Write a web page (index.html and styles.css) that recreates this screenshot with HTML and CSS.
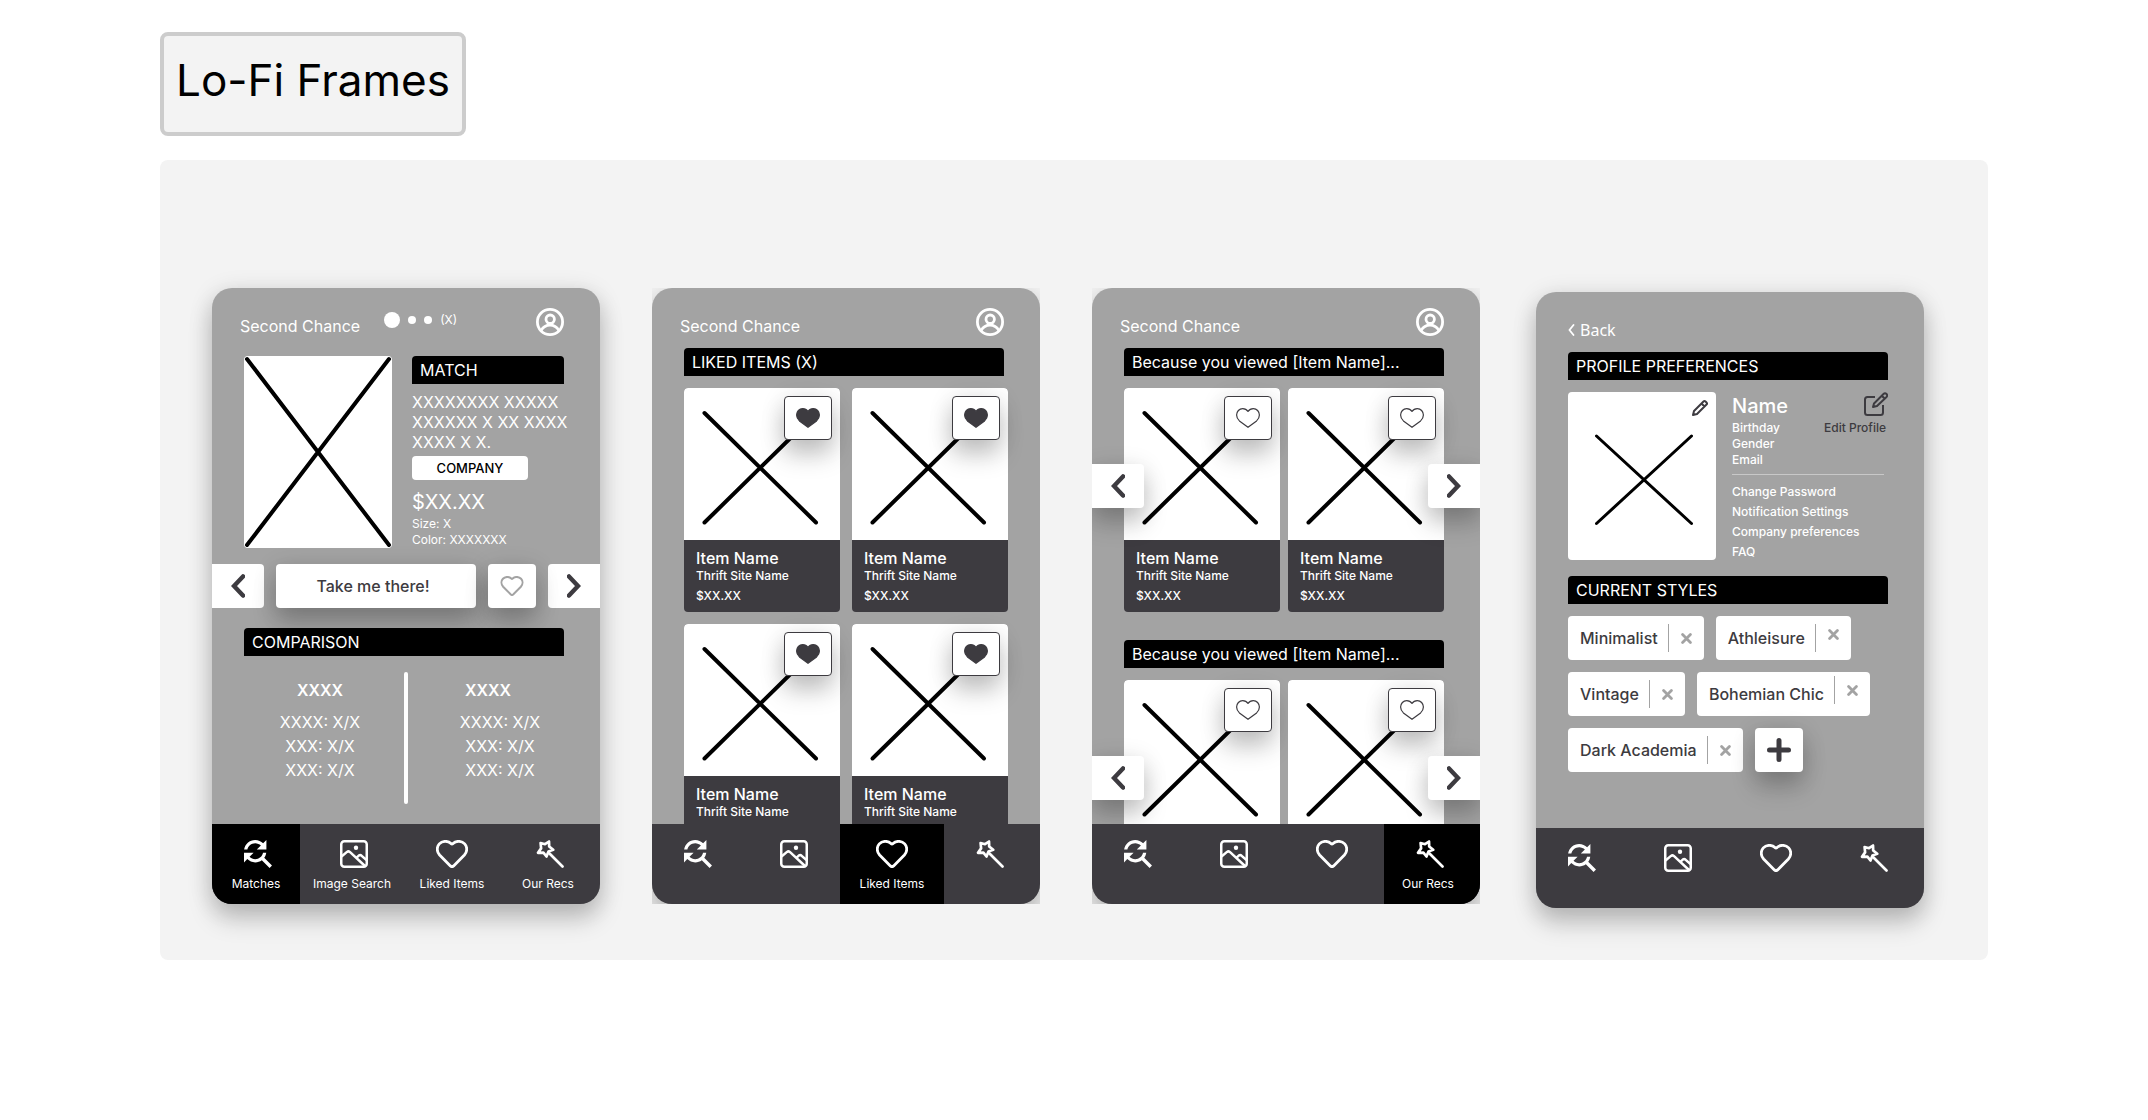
FILE: index.html
```html
<!DOCTYPE html>
<html lang="en">
<head>
<meta charset="utf-8">
<meta name="viewport" content="width=device-width, initial-scale=1">
<title>Second Chance – Lo-Fi Frames</title>
<link rel="stylesheet" href="styles.css">
</head>
<body>
<svg class="sprite" aria-hidden="true">
  <symbol id="i-user" viewBox="0 0 28 28"><g fill="none" stroke="currentColor" stroke-width="2.8"><circle cx="14" cy="14" r="12.6"/><circle cx="14.2" cy="11.2" r="4.2"/><path d="M5.2 22.4C7.2 19 10.2 17.2 14 17.2s6.8 1.8 8.8 5.2"/></g></symbol>
  <symbol id="i-match" viewBox="4 4 17.5 17.5"><path fill="currentColor" d="M11 6c1.38 0 2.63.56 3.54 1.46L12 10h6V4l-2.05 2.05C14.68 4.78 12.93 4 11 4c-3.53 0-6.43 2.61-6.92 6H6.1c.46-2.28 2.48-4 4.9-4zm5.64 9.14c.66-.9 1.12-1.97 1.28-3.14H15.9c-.46 2.28-2.48 4-4.9 4-1.38 0-2.63-.56-3.54-1.46L10 12H4v6l2.05-2.05C7.32 17.22 9.07 18 11 18c1.55 0 2.98-.51 4.14-1.36L20 21.49 21.49 20l-4.85-4.86z"/></symbol>
  <symbol id="i-image" viewBox="0 0 28 28"><g fill="none" stroke="currentColor" stroke-width="2.5" stroke-linejoin="round"><rect x="1.25" y="1.25" width="25.5" height="25.5" rx="3"/><path d="M1.5 16.5 7 11.9q1.4-1.1 2.8 0L25 26"/><path d="M16.6 17.6 18.8 15.6q1.3-1 2.6 0L26.5 20"/></g><circle cx="16" cy="7.8" r="2.2" fill="currentColor"/></symbol>
  <symbol id="i-heart" viewBox="0 0 32 28"><path fill="none" stroke="currentColor" stroke-width="2.8" stroke-linejoin="round" d="M14.4 25.9 3.6 15C.5 11.5.6 6.8 3.3 3.9 6.3.7 11.8.4 15 3.6q1 .8 2 0C20.2.4 25.7.7 28.7 3.9c2.7 2.9 2.8 7.6-.3 11.1L17.6 25.9q-1.6 1.4-3.2 0Z"/></symbol>
  <symbol id="i-like" viewBox="0 0 24 20"><path stroke="currentColor" stroke-width="1.2" stroke-linejoin="round" d="M12 19.3 3.4 12.9C1.6 11.3.6 9.4.6 7.1.6 3.5 3.3.6 6.7.6c2.2 0 4.1 1 5.3 2.8C13.2 1.6 15.1.6 17.3.6c3.4 0 6.1 2.9 6.1 6.5 0 2.3-1 4.2-2.8 5.8Z"/></symbol>
  <symbol id="i-wand" viewBox="0 0 28 28"><g fill="none" stroke="currentColor" stroke-width="2.7" stroke-linejoin="round" stroke-linecap="round"><path d="M4.6 3 9 4.2 13 1.5 13.2 6.5 17.2 9.8 12.5 11.5 10.5 16.5 7.4 12.6 2 12.8 5.1 8.4Z"/><path d="M13.5 13.5 26.5 26.5"/></g></symbol>
  <symbol id="i-prev" viewBox="0 0 14 24"><path fill="none" stroke="currentColor" stroke-width="4.4" stroke-linecap="round" d="M12 2.4 3 12l9 9.6"/></symbol>
  <symbol id="i-next" viewBox="0 0 14 24"><path fill="none" stroke="currentColor" stroke-width="4.4" stroke-linecap="round" d="M2 2.4 11 12l-9 9.6"/></symbol>
  <symbol id="i-back" viewBox="0 0 7 12"><path fill="none" stroke="currentColor" stroke-width="1.8" stroke-linecap="round" d="M5.5 1 1.5 6l4 5"/></symbol>
  <symbol id="i-pencil" viewBox="0 0 16 16"><path fill="none" stroke="currentColor" stroke-width="2" stroke-linejoin="round" d="M1 15 2 11 11.5 1.5q1-1 2 0l1 1q1 1 0 2L5 14ZM9.5 3.5l3 3"/></symbol>
  <symbol id="i-edit" viewBox="0 0 24 24"><g fill="none" stroke="currentColor" stroke-width="2" stroke-linejoin="round"><path d="M11 5H3.5Q1 5 1 7.5v13Q1 23 3.5 23h13q2.5 0 2.5-2.5V13"/><path d="M9 15 10 11.5 19.5 2q1.5-1.5 3 0t0 3L13 14ZM17.8 3.7l3 3"/></g></symbol>
  <symbol id="i-x" viewBox="0 0 11 11"><path fill="none" stroke="currentColor" stroke-width="2.8" stroke-linecap="round" d="m1.6 1.6 7.8 7.8m0-7.8-7.8 7.8"/></symbol>
  <symbol id="i-plus" viewBox="0 0 24 24"><path fill="none" stroke="currentColor" stroke-width="5" stroke-linecap="round" d="M12 2.5v19M2.5 12h19"/></symbol>
  <symbol id="i-cross" viewBox="0 0 156 152"><path fill="none" stroke="#000" stroke-width="4" stroke-linecap="round" d="M20.5 25 132 134.5M20.5 134.5 132 25"/></symbol>
</svg>

<header class="title"><h1>Lo-Fi Frames</h1></header>

<main class="board">

  <div class="frame">
    <section class="phone" aria-label="Matches">
      <header class="top">
        <span class="brand">Second Chance</span>
        <div class="pager"><i class="dot dot-lg"></i><i class="dot"></i><i class="dot"></i><span>(X)</span></div>
        <button class="plain account" aria-label="Account"><svg class="s28"><use href="#i-user"/></svg></button>
      </header>
      <div class="body body-match">
        <div class="match">
          <svg class="match-photo" viewBox="0 0 148 192" role="img" aria-label="Item photo"><path fill="none" stroke="#000" stroke-width="4" stroke-linecap="round" d="M3 3 145 189M3 189 145 3"/></svg>
          <div class="match-info">
            <h2 class="bar">MATCH</h2>
            <p class="desc">XXXXXXXX XXXXX<br>XXXXXX X XX XXXX<br>XXXX X X.</p>
            <button class="company">COMPANY</button>
            <p class="price">$XX.XX</p>
            <p class="small">Size: X</p>
            <p class="small">Color: XXXXXXX</p>
          </div>
        </div>
        <div class="actions">
          <button class="btn arrow arrow-prev" aria-label="Previous"><svg class="chev"><use href="#i-prev"/></svg></button>
          <button class="btn visit lift">Take me there!</button>
          <button class="btn square lift like-muted" aria-label="Like"><svg class="like"><use href="#i-heart"/></svg></button>
          <button class="btn arrow arrow-next" aria-label="Next"><svg class="chev"><use href="#i-next"/></svg></button>
        </div>
        <h2 class="bar">COMPARISON</h2>
        <div class="compare">
          <div class="compare-col"><h3>XXXX</h3><p>XXXX: X/X</p><p>XXX: X/X</p><p>XXX: X/X</p></div>
          <div class="compare-line"></div>
          <div class="compare-col compare-right"><h3>XXXX</h3><p>XXXX: X/X</p><p>XXX: X/X</p><p>XXX: X/X</p></div>
        </div>
      </div>
      <nav class="tabs">
        <a class="on" href="#"><svg class="s28"><use href="#i-match"/></svg><span>Matches</span></a>
        <a href="#"><svg class="s28"><use href="#i-image"/></svg><span>Image Search</span></a>
        <a href="#"><svg class="s32"><use href="#i-heart"/></svg><span>Liked Items</span></a>
        <a href="#"><svg class="s28"><use href="#i-wand"/></svg><span>Our Recs</span></a>
      </nav>
    </section>
  </div>

  <div class="frame clipped">
    <section class="phone" aria-label="Liked items">
      <header class="top">
        <span class="brand">Second Chance</span>
        <button class="plain account" aria-label="Account"><svg class="s28"><use href="#i-user"/></svg></button>
      </header>
      <div class="body">
        <h2 class="bar">LIKED ITEMS (X)</h2>
        <div class="cards">
          <article class="card"><div class="pic"><svg><use href="#i-cross"/></svg><button class="btn square lift outlined" aria-label="Unlike"><svg class="like full"><use href="#i-like"/></svg></button></div><div class="info"><h3>Item Name</h3><p>Thrift Site Name</p><p class="cost">$XX.XX</p></div></article>
          <article class="card"><div class="pic"><svg><use href="#i-cross"/></svg><button class="btn square lift outlined" aria-label="Unlike"><svg class="like full"><use href="#i-like"/></svg></button></div><div class="info"><h3>Item Name</h3><p>Thrift Site Name</p><p class="cost">$XX.XX</p></div></article>
          <article class="card"><div class="pic"><svg><use href="#i-cross"/></svg><button class="btn square lift outlined" aria-label="Unlike"><svg class="like full"><use href="#i-like"/></svg></button></div><div class="info"><h3>Item Name</h3><p>Thrift Site Name</p></div></article>
          <article class="card"><div class="pic"><svg><use href="#i-cross"/></svg><button class="btn square lift outlined" aria-label="Unlike"><svg class="like full"><use href="#i-like"/></svg></button></div><div class="info"><h3>Item Name</h3><p>Thrift Site Name</p></div></article>
        </div>
      </div>
      <nav class="tabs">
        <a href="#" aria-label="Matches"><svg class="s28"><use href="#i-match"/></svg></a>
        <a href="#" aria-label="Image Search"><svg class="s28"><use href="#i-image"/></svg></a>
        <a class="on" href="#"><svg class="s32"><use href="#i-heart"/></svg><span>Liked Items</span></a>
        <a href="#" aria-label="Our Recs"><svg class="s28"><use href="#i-wand"/></svg></a>
      </nav>
    </section>
  </div>

  <div class="frame clipped">
    <section class="phone" aria-label="Our recs">
      <header class="top">
        <span class="brand">Second Chance</span>
        <button class="plain account" aria-label="Account"><svg class="s28"><use href="#i-user"/></svg></button>
      </header>
      <div class="body body-recs">
        <section>
          <h2 class="bar">Because you viewed [Item Name]...</h2>
          <div class="cards carousel">
            <article class="card"><div class="pic"><svg><use href="#i-cross"/></svg><button class="btn square lift outlined" aria-label="Like"><svg class="like"><use href="#i-like"/></svg></button></div><div class="info"><h3>Item Name</h3><p>Thrift Site Name</p><p class="cost">$XX.XX</p></div></article>
            <article class="card"><div class="pic"><svg><use href="#i-cross"/></svg><button class="btn square lift outlined" aria-label="Like"><svg class="like"><use href="#i-like"/></svg></button></div><div class="info"><h3>Item Name</h3><p>Thrift Site Name</p><p class="cost">$XX.XX</p></div></article>
            <button class="btn arrow arrow-prev lift" aria-label="Previous"><svg class="chev"><use href="#i-prev"/></svg></button>
            <button class="btn arrow arrow-next lift" aria-label="Next"><svg class="chev"><use href="#i-next"/></svg></button>
          </div>
        </section>
        <section>
          <h2 class="bar">Because you viewed [Item Name]...</h2>
          <div class="cards carousel">
            <article class="card"><div class="pic"><svg><use href="#i-cross"/></svg><button class="btn square lift outlined" aria-label="Like"><svg class="like"><use href="#i-like"/></svg></button></div></article>
            <article class="card"><div class="pic"><svg><use href="#i-cross"/></svg><button class="btn square lift outlined" aria-label="Like"><svg class="like"><use href="#i-like"/></svg></button></div></article>
            <button class="btn arrow arrow-prev lift" aria-label="Previous"><svg class="chev"><use href="#i-prev"/></svg></button>
            <button class="btn arrow arrow-next lift" aria-label="Next"><svg class="chev"><use href="#i-next"/></svg></button>
          </div>
        </section>
      </div>
      <nav class="tabs">
        <a href="#" aria-label="Matches"><svg class="s28"><use href="#i-match"/></svg></a>
        <a href="#" aria-label="Image Search"><svg class="s28"><use href="#i-image"/></svg></a>
        <a href="#" aria-label="Liked Items"><svg class="s32"><use href="#i-heart"/></svg></a>
        <a class="on" href="#"><svg class="s28"><use href="#i-wand"/></svg><span>Our Recs</span></a>
      </nav>
    </section>
  </div>

  <div class="frame frame-profile">
    <section class="phone" aria-label="Profile">
      <header class="top">
        <a class="back" href="#"><svg><use href="#i-back"/></svg>Back</a>
      </header>
      <div class="body">
        <h2 class="bar">PROFILE PREFERENCES</h2>
        <div class="profile">
          <div class="avatar">
            <svg class="avatar-x" viewBox="0 0 148 168" role="img" aria-label="Profile photo"><path fill="none" stroke="#000" stroke-width="3" stroke-linecap="round" d="M28.5 44 123.5 131.5M28.5 131.5 123.5 44"/></svg>
            <button class="plain avatar-edit" aria-label="Change photo"><svg class="s16"><use href="#i-pencil"/></svg></button>
          </div>
          <div class="details">
            <div class="who">
              <div><h3>Name</h3><p>Birthday</p><p>Gender</p><p>Email</p></div>
              <button class="plain edit"><svg class="s24"><use href="#i-edit"/></svg><span>Edit Profile</span></button>
            </div>
            <hr>
            <a href="#">Change Password</a>
            <a href="#">Notification Settings</a>
            <a href="#">Company preferences</a>
            <a href="#">FAQ</a>
          </div>
        </div>
        <h2 class="bar">CURRENT STYLES</h2>
        <div class="tags">
          <div class="tag"><span>Minimalist</span><button class="plain remove" aria-label="Remove Minimalist"><svg><use href="#i-x"/></svg></button></div>
          <div class="tag"><span>Athleisure</span><button class="plain remove remove-top" aria-label="Remove Athleisure"><svg><use href="#i-x"/></svg></button></div>
          <div class="tag"><span>Vintage</span><button class="plain remove" aria-label="Remove Vintage"><svg><use href="#i-x"/></svg></button></div>
          <div class="tag tag-top"><span>Bohemian Chic</span><button class="plain remove" aria-label="Remove Bohemian Chic"><svg><use href="#i-x"/></svg></button></div>
          <div class="tag"><span>Dark Academia</span><button class="plain remove" aria-label="Remove Dark Academia"><svg><use href="#i-x"/></svg></button></div>
          <button class="btn square lift" aria-label="Add style"><svg class="s24"><use href="#i-plus"/></svg></button>
        </div>
      </div>
      <nav class="tabs">
        <a href="#" aria-label="Matches"><svg class="s28"><use href="#i-match"/></svg></a>
        <a href="#" aria-label="Image Search"><svg class="s28"><use href="#i-image"/></svg></a>
        <a href="#" aria-label="Liked Items"><svg class="s32"><use href="#i-heart"/></svg></a>
        <a href="#" aria-label="Our Recs"><svg class="s28"><use href="#i-wand"/></svg></a>
      </nav>
    </section>
  </div>

</main>
</body>
</html>
```
FILE: styles.css
```css
:root {
  --ink: #3d3b40;
  --gray: #a3a3a3;
  --board: #f3f3f3;
  --shadow: 0 16px 24px rgba(0, 0, 0, .18), 0 4px 24px rgba(0, 0, 0, .14);
}

* { box-sizing: border-box; }

body {
  margin: 0;
  padding: 32px 160px;
  background: #fff;
  font: 400 16px/20px Inter, "Liberation Sans", sans-serif;
  color: #fff;
}

h1, h2, h3, p { margin: 0; font-size: inherit; font-weight: inherit; }
a { color: inherit; text-decoration: none; }
button { font: inherit; color: inherit; border: 0; padding: 0; cursor: pointer; }
svg { display: block; flex: none; }

.sprite { position: absolute; width: 0; height: 0; }
.plain { background: none; }
.s16 { width: 16px; height: 16px; }
.s24 { width: 24px; height: 24px; }
.s28 { width: 28px; height: 28px; }
.s32 { width: 32px; height: 28px; }

.title {
  width: fit-content;
  height: 104px;
  margin-bottom: 24px;
  padding: 16px 12px;
  border: 4px solid #ccc;
  border-radius: 8px;
  background: var(--board);
  color: #000;
}
.title h1 { font-size: 44px; line-height: 56px; }

.board {
  display: flex;
  flex-wrap: wrap;
  gap: 52px;
  min-height: 800px;
  padding: 128px 52px 52px;
  border-radius: 8px;
  background: var(--board);
}

.frame { flex: 0 0 388px; min-width: 0; height: 616px; border-radius: 20px; }
.clipped { overflow: hidden; border-radius: 0; }
.frame-profile { margin: 4px 0 0 4px; }

.phone {
  display: flex;
  flex-direction: column;
  height: 100%;
  overflow: hidden;
  border-radius: 20px;
  background: var(--gray);
  box-shadow: var(--shadow);
}

.top {
  display: flex;
  flex: none;
  align-items: flex-start;
  height: 60px;
  padding: 20px 36px 0 28px;
}
.brand { padding-top: 8px; }
.account { margin-left: auto; }
.pager { display: flex; align-items: center; gap: 8px; height: 24px; margin-left: 24px; font-size: 12px; }
.dot { width: 8px; height: 8px; border-radius: 50%; background: #fff; }
.dot-lg { width: 16px; height: 16px; }

.body { flex: 1; min-height: 0; padding: 0 36px 0 32px; }
.body-match { padding-top: 8px; }

.bar {
  height: 28px;
  padding: 4px 8px;
  border-radius: 4px 4px 0 0;
  background: #000;
}

.btn {
  display: flex;
  align-items: center;
  justify-content: center;
  height: 44px;
  border-radius: 4px;
  background: #fff;
  color: var(--ink);
  font-weight: 500;
}
.lift { box-shadow: var(--shadow); }
.square { width: 48px; }
.arrow { width: 52px; }
.arrow-prev { border-radius: 0 4px 4px 0; }
.arrow-next { border-radius: 4px 0 0 4px; }
.chev { width: 14px; height: 24px; }
.like { width: 24px; height: 20px; fill: none; }
.like.full { fill: currentColor; }

/* match */
.match { display: grid; grid-template-columns: 148px minmax(0, 1fr); gap: 20px; }
.match-photo { width: 148px; height: 192px; border-radius: 4px; background: #fff; }
.desc { margin: 8px 0 4px; white-space: nowrap; }
.company {
  display: block;
  width: 116px;
  height: 24px;
  border-radius: 4px;
  background: #fff;
  color: #000;
  font-size: 13px;
  font-weight: 500;
  line-height: 24px;
}
.price { margin-top: 8px; font-size: 20px; line-height: 28px; }
.small { font-size: 12px; line-height: 16px; }

.actions { display: flex; gap: 12px; margin: 16px -36px 20px -32px; }
.visit { flex: 1; padding-right: 6px; }
.like-muted { z-index: 1; color: var(--gray); }

.compare { display: grid; grid-template-columns: 152px 4px 1fr; gap: 8px; margin-top: 16px; text-align: center; line-height: 24px; }
.compare-col { padding-top: 6px; }
.compare-col h3 { margin-bottom: 8px; font-weight: 600; }
.compare-line { height: 132px; border-radius: 2px; background: #fff; }
.compare-right h3 { padding-right: 4px; }
.compare-right p { padding-left: 20px; }

/* item cards */
.cards { display: grid; grid-template-columns: 156px 156px; gap: 12px; margin-top: 12px; }
.card { border-radius: 4px; background: var(--ink); }
.pic { position: relative; height: 152px; border-radius: 4px 4px 0 0; background: #fff; }
.pic > svg { width: 156px; height: 152px; }
.pic .btn { position: absolute; top: 8px; right: 8px; }
.outlined { border: 1px solid var(--ink); }
.info { min-height: 72px; padding: 8px 12px; font-size: 12px; font-weight: 500; line-height: 16px; }
.info h3 { font-size: 16px; line-height: 20px; }
.cost { margin-top: 4px; }

.body-recs { display: flex; flex-direction: column; gap: 28px; }
.carousel { position: relative; gap: 8px; }
.carousel > .arrow { position: absolute; top: 76px; }
.carousel > .arrow-prev { left: -32px; }
.carousel > .arrow-next { right: -36px; }

/* profile */
.back { display: flex; align-items: center; gap: 5px; padding: 8px 4px; font-family: "Noto Sans", sans-serif; }
.back svg { width: 7px; height: 12px; }
.profile { display: grid; grid-template-columns: 148px 1fr; align-items: start; gap: 16px; margin: 12px 0 14px; }
.avatar { position: relative; border-radius: 4px; background: #fff; }
.avatar-x { width: 148px; height: 168px; }
.avatar-edit { position: absolute; top: 8px; right: 8px; color: var(--ink); }
.details { font-size: 12px; font-weight: 500; line-height: 16px; }
.details h3 { font-size: 20px; line-height: 28px; }
.details > a { display: block; line-height: 20px; }
.details hr { height: 1px; margin: 6px 4px 7px 0; border: 0; background: #c8c8c8; }
.who { display: flex; justify-content: space-between; align-items: flex-start; }
.edit { display: flex; flex-direction: column; align-items: flex-end; gap: 4px; color: var(--ink); }
.edit span { padding-right: 2px; }

.tags { display: flex; flex-wrap: wrap; gap: 12px; margin-top: 12px; }
.tag { display: flex; align-items: center; gap: 10px; height: 44px; padding: 0 12px; border-radius: 4px; background: #fff; color: var(--ink); font-weight: 500; }
.remove { display: flex; align-items: center; height: 28px; padding-left: 12px; border-left: 1px solid var(--gray); color: var(--gray); }
.remove svg { width: 11px; height: 11px; }
.remove-top { padding-bottom: 8px; }
.tag-top .remove { align-self: flex-start; margin-top: 4px; }

/* bottom tabs */
.tabs {
  display: grid;
  position: relative;
  flex: none;
  grid-template-columns: 88px 100px 104px 96px;
  height: 80px;
  background: var(--ink);
  font-size: 12px;
  line-height: 16px;
}
.tabs a { display: flex; flex-direction: column; align-items: center; gap: 8px; padding-top: 16px; white-space: nowrap; }
.tabs a:nth-child(2) { padding-left: 4px; }
.tabs a:last-child { padding-right: 8px; }
.tabs .s28 { margin-left: 4px; }
.tabs .on { background: #000; }
```
